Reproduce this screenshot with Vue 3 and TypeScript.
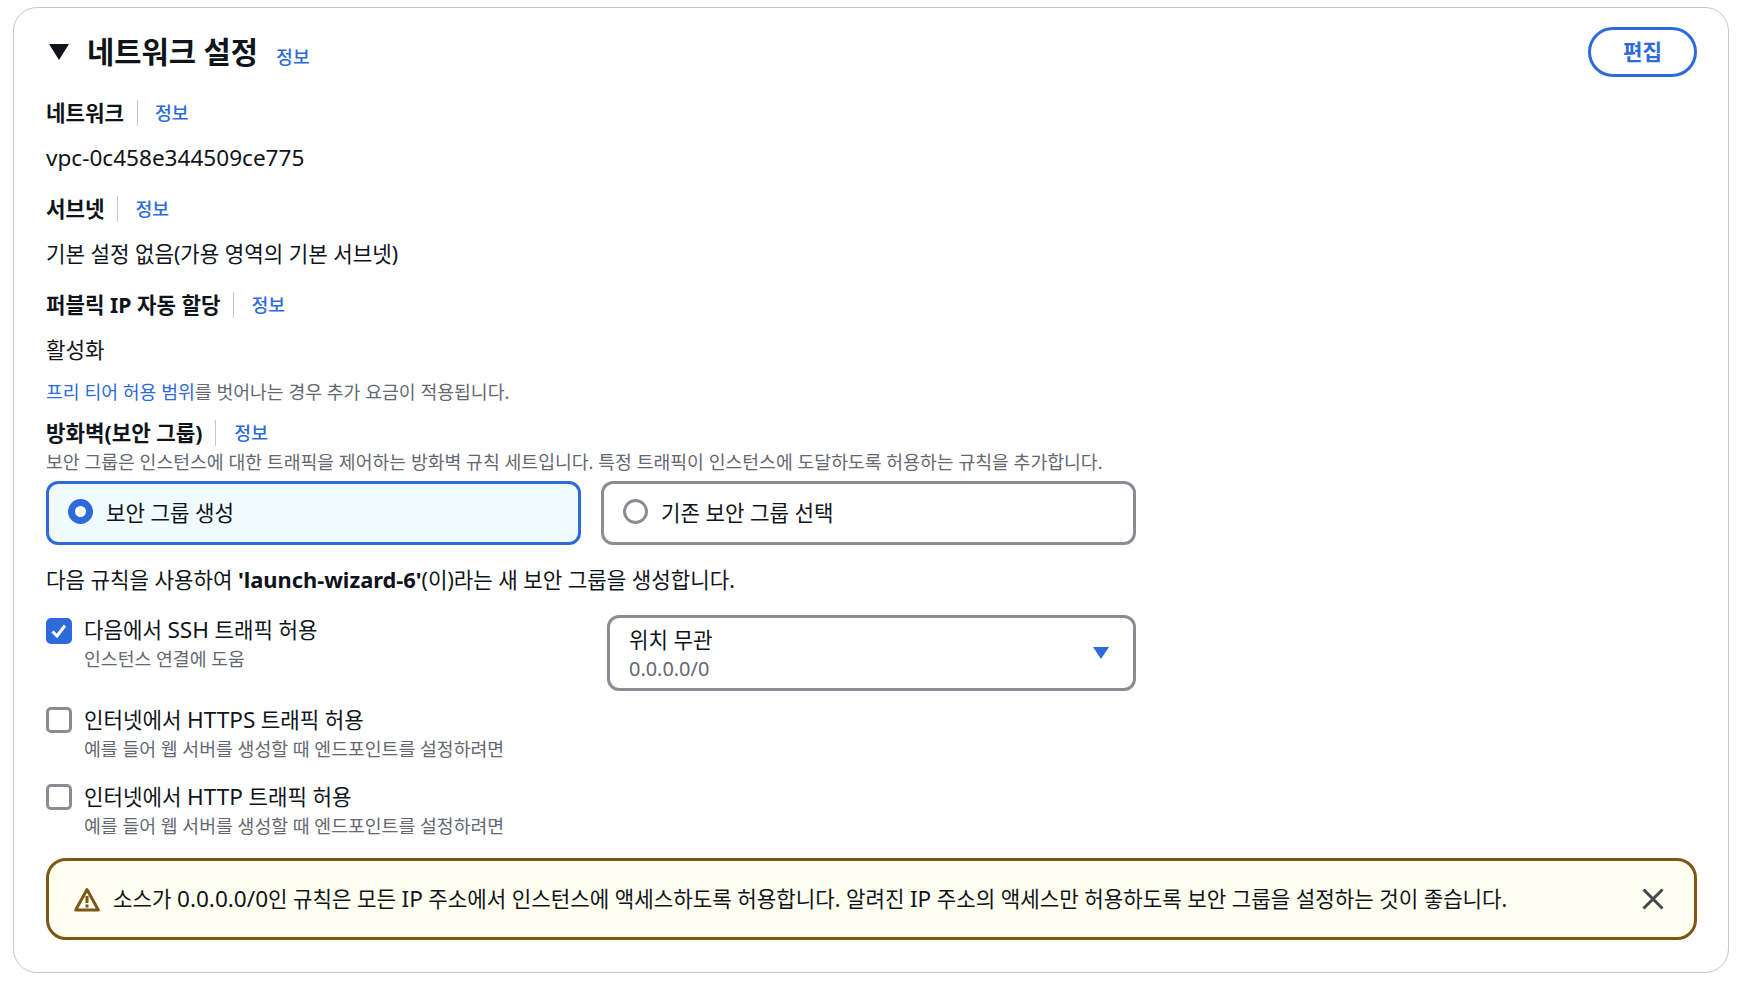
<script setup lang="ts">
const rules = [
  { pre: '인터넷에서 ', lat: 'HTTPS', post: ' 트래픽 허용', hint: '예를 들어 웹 서버를 생성할 때 엔드포인트를 설정하려면' },
  { pre: '인터넷에서 ', lat: 'HTTP', post: ' 트래픽 허용', hint: '예를 들어 웹 서버를 생성할 때 엔드포인트를 설정하려면' },
]
</script>

<template>
  <div class="page">
    <section class="card">
      <header class="head">
        <svg class="caret" width="22" height="18" viewBox="0 0 22 18"><path d="M1 1h20L11 17z" fill="#0f141a" /></svg>
        <h2 class="title">네트워크 설정</h2>
        <a class="info title-info">정보</a>
        <button class="edit">편집</button>
      </header>

      <div class="field">
        <div class="label-row">
          <span class="label">네트워크</span>
          <span class="sep"></span>
          <a class="info">정보</a>
        </div>
        <div class="value"><span class="lat">vpc-0c458e344509ce775</span></div>
      </div>
      <div class="field">
        <div class="label-row">
          <span class="label">서브넷</span>
          <span class="sep"></span>
          <a class="info">정보</a>
        </div>
        <div class="value">기본 설정 없음(가용 영역의 기본 서브넷)</div>
      </div>
      <div class="field">
        <div class="label-row">
          <span class="label">퍼블릭 IP 자동 할당</span>
          <span class="sep"></span>
          <a class="info">정보</a>
        </div>
        <div class="value">활성화</div>
      </div>

      <p class="free"><a class="link">프리 티어 허용 범위</a>를 벗어나는 경우 추가 요금이 적용됩니다.</p>

      <div class="label-row fw">
        <span class="label">방화벽(보안 그룹)</span>
        <span class="sep"></span>
        <a class="info">정보</a>
      </div>
      <p class="desc">보안 그룹은 인스턴스에 대한 트래픽을 제어하는 방화벽 규칙 세트입니다. 특정 트래픽이 인스턴스에 도달하도록 허용하는 규칙을 추가합니다.</p>

      <div class="tiles">
        <div class="tile on"><span class="radio on"></span>보안 그룹 생성</div>
        <div class="tile"><span class="radio"></span>기존 보안 그룹 선택</div>
      </div>

      <p class="rule-intro">다음 규칙을 사용하여 <b>'launch-wizard-6'</b>(이)라는 새 보안 그룹을 생성합니다.</p>

      <div class="ssh">
        <div class="check-row">
          <span class="box on">
            <svg width="20" height="20" viewBox="0 0 20 20"><path d="M3.5 10.5 8 15 16 4.5" fill="none" stroke="#fff" stroke-width="3" /></svg>
          </span>
          <div>
            <div class="check-title">다음에서 <span class="lat">SSH</span> 트래픽 허용</div>
            <div class="hint">인스턴스 연결에 도움</div>
          </div>
        </div>
        <div class="select">
          <div>
            <div class="sel-main">위치 무관</div>
            <div class="sel-sub">0.0.0.0/0</div>
          </div>
          <svg width="18" height="14" viewBox="0 0 18 14"><path d="M1 1h16L9 13z" fill="#2d6bdb" /></svg>
        </div>
      </div>

      <div v-for="r in rules" :key="r.lat" class="check-row plain">
        <span class="box"></span>
        <div>
          <div class="check-title">{{ r.pre }}<span class="lat">{{ r.lat }}</span>{{ r.post }}</div>
          <div class="hint">{{ r.hint }}</div>
        </div>
      </div>

      <div class="alert">
        <svg class="warn" width="26" height="25" viewBox="0 0 26 25">
          <path d="M13 2.5 24.3 23H1.7z" fill="none" stroke="#7d5715" stroke-width="3" stroke-linejoin="round" />
          <path d="M13 9v7" stroke="#7d5715" stroke-width="3" />
          <path d="M13 17.5v3" stroke="#7d5715" stroke-width="3" />
        </svg>
        <span class="alert-text">소스가 <span class="lat">0.0.0.0/0</span>인 규칙은 모든 <span class="lat">IP</span> 주소에서 인스턴스에 액세스하도록 허용합니다. 알려진 <span class="lat">IP</span> 주소의 액세스만 허용하도록 보안 그룹을 설정하는 것이 좋습니다.</span>
        <svg class="close" width="22" height="22" viewBox="0 0 22 22"><path d="M1.5 1.5l19 19M20.5 1.5l-19 19" stroke="#424650" stroke-width="3" /></svg>
      </div>
    </section>
  </div>
</template>

<style>
html, body { background: #fff; }
</style>

<style scoped>
.page {
  width: 1742px;
  height: 986px;
  padding: 7px 13px 0;
  box-sizing: border-box;
  font-family: "Noto Sans", "Noto Sans CJK KR", sans-serif;
  color: #0f141a;
}
.card {
  height: 966px;
  box-sizing: border-box;
  border: 1px solid #c6c6cd;
  border-radius: 24px;
  padding: 18px 31px 0 32px;
}
.lat { font-size: 1.065em; }
.head { display: flex; align-items: center; height: 52px; margin-bottom: 22px; }
.caret { margin-left: 2px; }
.title { font-size: 29.6px; font-weight: 700; margin: 0 0 0 17px; line-height: 40px; }
.info { color: #2d6bdb; font-size: 18.3px; font-weight: 500; line-height: 26px; }
.title-info { margin: 9px 0 0 18px; }
.edit {
  margin-left: auto;
  width: 109px;
  height: 50px;
  padding: 0 0 3px;
  border: 3px solid #2d6bdb;
  border-radius: 25px;
  background: #fff;
  color: #2d6bdb;
  font: 700 21.2px "Noto Sans", "Noto Sans CJK KR", sans-serif;
}
.label-row { display: flex; align-items: center; height: 26px; }
.label { font-size: 21.2px; font-weight: 700; line-height: 26px; }
.sep { width: 1px; height: 26px; background: #c6c6cd; margin: 0 17px 0 13px; }
.field { height: 96px; }
.value { font-size: 21.2px; line-height: 30px; margin-top: 17px; }
.free { margin: -9px 0 0; font-size: 18.3px; line-height: 26px; color: #656871; }
.link { color: #2d6bdb; }
.fw { margin-top: 15px; }
.fw .sep { margin-right: 18px; }
.desc { margin: 3px 0 0; font-size: 18.3px; line-height: 25px; color: #656871; }
.tiles { display: flex; gap: 20px; width: 1090px; margin-top: 7px; }
.tile {
  flex: 1;
  height: 64px;
  box-sizing: border-box;
  display: flex;
  align-items: center;
  gap: 13px;
  padding: 0 0 3px 19px;
  border: 3px solid #8c8c94;
  border-radius: 12px;
  font-size: 21.2px;
}
.tile.on { border-color: #2d6bdb; background: #f0fbff; }
.radio {
  width: 25px;
  height: 25px;
  box-sizing: border-box;
  border: 3px solid #8c8c94;
  border-radius: 50%;
  background: #fff;
}
.radio.on { border: 7px solid #2d6bdb; }
.rule-intro { margin: 20px 0 0; font-size: 21.2px; line-height: 30px; }
.rule-intro b { font-weight: 700; font-size: 1.03em; }
.ssh { display: flex; justify-content: space-between; width: 1090px; margin-top: 20px; }
.check-row { display: flex; gap: 12px; }
.check-row.plain { margin-top: 20px; }
.ssh + .check-row.plain { margin-top: 14px; }
.box {
  width: 26px;
  height: 26px;
  box-sizing: border-box;
  border: 3px solid #8c8c94;
  border-radius: 5px;
  margin-top: 2px;
  flex: none;
  display: flex;
  align-items: center;
  justify-content: center;
}
.box.on { background: #2d6bdb; border-color: #2d6bdb; margin-top: 3px; }
.check-title { font-size: 21.2px; line-height: 30px; }
.hint { font-size: 18.3px; line-height: 26px; color: #656871; margin-top: 1px; }
.select {
  width: 529px;
  height: 76px;
  box-sizing: border-box;
  display: flex;
  align-items: center;
  justify-content: space-between;
  padding: 0 23px 0 19px;
  border: 3px solid #8c8c94;
  border-radius: 12px;
}
.sel-main { font-size: 21.2px; line-height: 30px; }
.sel-sub { font-size: 19.9px; line-height: 26px; margin-top: 1px; color: #656871; }
.alert {
  display: flex;
  align-items: center;
  height: 82px;
  box-sizing: border-box;
  margin-top: 19px;
  padding: 0 30px 0 25px;
  border: 3px solid #7d5715;
  border-radius: 20px;
  background: #fffef0;
}
.alert-text { font-size: 21.2px; line-height: 30px; margin-left: 13px; }
.close { margin-left: auto; }
</style>
